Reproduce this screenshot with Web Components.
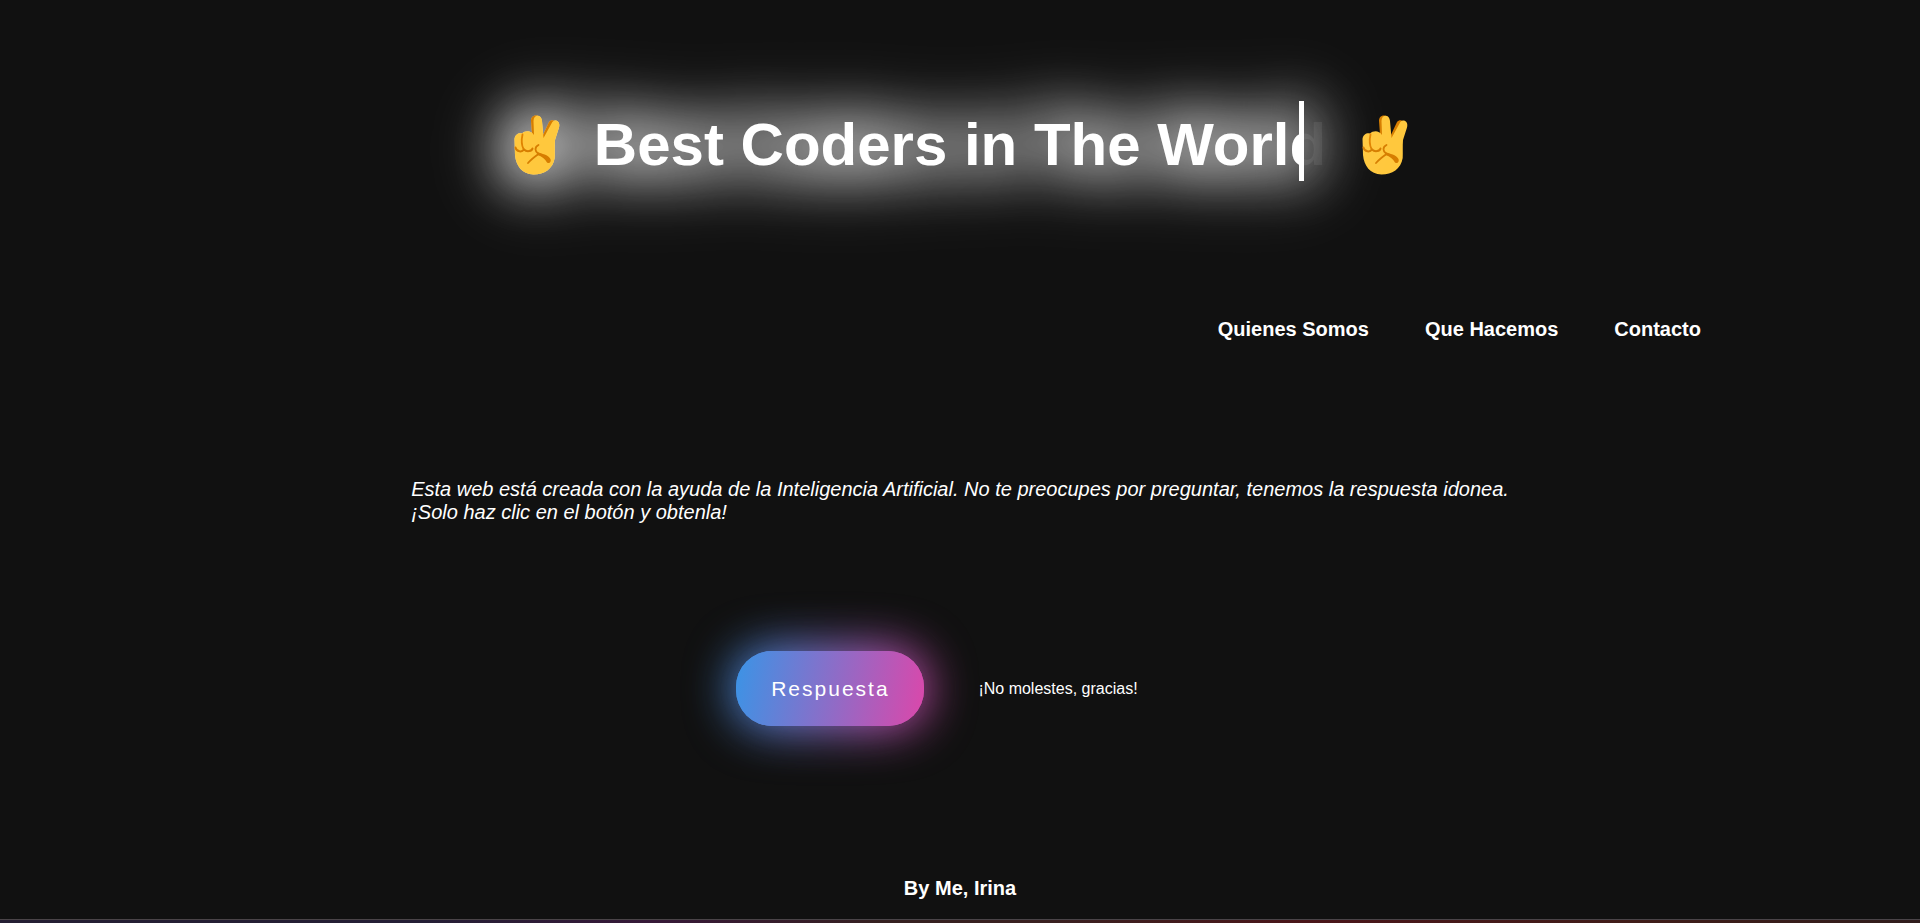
<!DOCTYPE html>
<html lang="es">
<head>
<meta charset="utf-8">
<title>Best Coders in The World</title>
<style>
html, body { margin: 0; }
body { background: #111; color: #fff; font-family: "Liberation Sans", Arial, sans-serif; }
</style>
</head>
<body>
<coders-page>
  <glow-title slot="title" text="Best Coders in The World"></glow-title>
  <site-nav slot="nav"></site-nav>
  <intro-text slot="intro">Esta web está creada con la ayuda de la Inteligencia Artificial. No te preocupes por preguntar, tenemos la respuesta idonea.<br>¡Solo haz clic en el botón y obtenla!</intro-text>
  <answer-box slot="answer"><span slot="label">Respuesta</span>¡No molestes, gracias!</answer-box>
  <page-footer slot="footer">By Me, Irina</page-footer>
</coders-page>
<script>
function define(name, html, setup) {
  customElements.define(name, class extends HTMLElement {
    constructor() {
      super();
      this.attachShadow({ mode: 'open' }).innerHTML = html;
    }
    connectedCallback() { if (setup) setup(this); }
  });
}

define('victory-hand', `
<style>
:host { display: block; flex: none; width: 82px; height: 80px; }
svg { display: block; }
</style>
<svg width="82" height="80" viewBox="0 0 82 80" aria-hidden="true">
  <path fill="#d67d00" d="M37 33 L36 20 C36 13 45 13 46.300 19 L47 36 L54 21 C57 17 64 20 61 27 L56 42 L28 42 Z"/>
  <path fill="#ffc83d" d="M38.500 20 C38.500 13 46.500 13 47 20 L48.500 37 L56.500 22.500 C58.500 17 66 19.500 64 26.500 L60 39 C59.500 45 60 52 59.700 57 C58 68 49 73.500 38.500 73.500 C27 73 21 65 20 54 L19.500 38 C20 33.500 24 31.500 27 32.500 C30 29.500 36 29 39 34 Z"/>
  <path fill="none" stroke="#e08300" stroke-width="1.800" stroke-linecap="round" d="M27.500 33.500 C26.500 38 26.500 44 28.500 48"/>
  <path fill="none" stroke="#d67d00" stroke-width="2" stroke-linecap="round" d="M20.500 46.500 C21.500 51 27 51.500 29 48.500 C32 51.500 37 50 37.500 47.500"/>
  <path fill="none" stroke="#d67d00" stroke-width="1.800" stroke-linecap="round" d="M43.500 44 C39.500 46 39.500 50 43.500 53 C40 55.500 36 58.500 33 62"/>
  <path fill="#d67d00" d="M42.500 51 C47 53 53 53.500 55.500 58 C56.500 61 54.500 63 52 61.500 C50 58 47 55.500 42.500 54 Z"/>
</svg>`);

define('glow-title', `
<style>
:host { display: flex; justify-content: center; }
h1 { position: relative; margin: 0; display: flex; gap: 17px; color: #222; font-size: 60px; line-height: 72px; }
.text { padding-top: 8px; white-space: nowrap; }
/* typed part: clipped copy of the title with a caret on its right edge */
.typed { position: absolute; top: 0; left: 0; box-sizing: border-box; width: 87%; height: 100%; display: flex; gap: 17px; overflow: hidden;
  color: #fff; border-right: 5px solid #fff; filter: drop-shadow(0 0 30px #fff) drop-shadow(0 0 30px #fff); }
.typed::after { content: attr(data-text); padding-top: 8px; white-space: nowrap; }
</style>
<h1><victory-hand></victory-hand><span class="text"></span><victory-hand></victory-hand>
<span class="typed" aria-hidden="true"><victory-hand></victory-hand></span></h1>`, el => {
  const text = el.getAttribute('text');
  el.shadowRoot.querySelector('.text').textContent = text;
  el.shadowRoot.querySelector('.typed').dataset.text = text;
});

define('site-nav', `
<style>
:host { display: block; }
nav { display: flex; justify-content: flex-end; gap: 56px; font-size: 20px; line-height: 24px; font-weight: bold; }
a { color: inherit; text-decoration: none; }
</style>
<nav><a href="#quienes">Quienes Somos</a><a href="#que">Que Hacemos</a><a href="#contacto">Contacto</a></nav>`);

define('intro-text', `
<style>
:host { display: flex; justify-content: center; }
p { margin: 0; font-size: 20px; line-height: 23px; font-style: italic; }
</style>
<p><slot></slot></p>`);

define('answer-box', `
<style>
:host { display: flex; justify-content: center; align-items: center; gap: 54px; padding-right: 46px;
  --fill: linear-gradient(100deg, #3a94e6, #dc47aa); }
button { position: relative; isolation: isolate; width: 188px; height: 75px; padding: 0; border: 0; border-radius: 36px;
  background: var(--fill); color: #fff; font: 21px "Liberation Sans", Arial, sans-serif; letter-spacing: 2px; }
button::before { content: ""; position: absolute; inset: 0; z-index: -1; border-radius: inherit; background: var(--fill); filter: blur(25px); }
button::after { content: ""; position: absolute; inset: 0; z-index: -1; border-radius: inherit; background: var(--fill); filter: blur(25px); opacity: 0.3; }
.face { position: absolute; inset: 0; display: grid; place-items: center; border-radius: inherit; background: var(--fill); }
p { margin: 0; font-size: 16px; line-height: 20px; }
</style>
<button type="button"><span class="face"><slot name="label"></slot></span></button>
<p><slot></slot></p>`);

define('page-footer', `
<style>
:host { display: block; text-align: center; font-size: 20px; line-height: 24px; font-weight: bold; }
.text { padding-bottom: 19px; }
.strip { height: 3px; border-top: 1px solid #4a4448; background: linear-gradient(90deg, #241e33, #241e35 22%, #361838 34%, #352020 46%, #3a2020 55%, #4a1519 68%, #401c18 85%, #301c1c); }
</style>
<div class="text"><slot></slot></div><div class="strip"></div>`);

define('coders-page', `
<style>
:host { display: flex; flex-direction: column; min-height: 100vh; overflow: hidden; }
header { padding-top: 101px; }
.nav { padding: 136px 219px 0 0; }
main { padding-top: 137px; }
.answer { padding-top: 127px; }
footer { margin-top: auto; }
</style>
<header><slot name="title"></slot><div class="nav"><slot name="nav"></slot></div></header>
<main><slot name="intro"></slot><div class="answer"><slot name="answer"></slot></div></main>
<footer><slot name="footer"></slot></footer>`);
</script>
</body>
</html>
